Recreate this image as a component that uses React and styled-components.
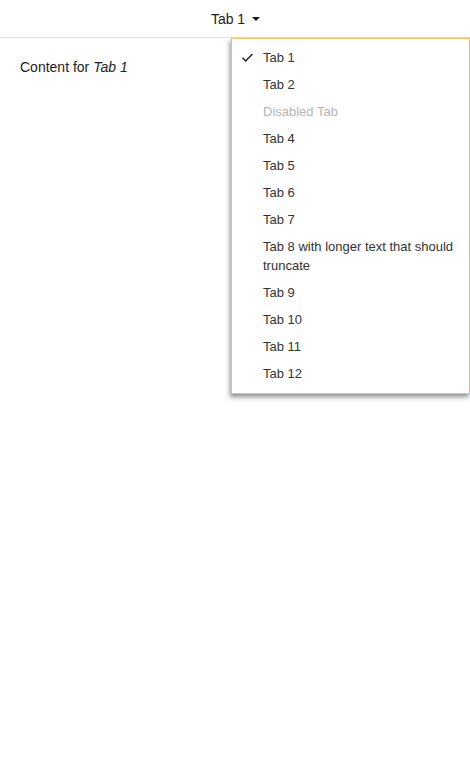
import React from 'react'
import styled, { createGlobalStyle } from 'styled-components'

const Global = createGlobalStyle`
  body {
    margin: 0;
    font-family: "Liberation Sans", Arial, sans-serif;
    color: #222;
    background: #fff;
  }
`

const Page = styled.div`
  position: relative;
  width: 470px;
  min-height: 768px;
`

const TabBar = styled.div`
  height: 37px;
  border-bottom: 1px solid #e0e0e0;
  display: flex;
  align-items: center;
  justify-content: center;
`

const TabButton = styled.button`
  display: flex;
  align-items: center;
  gap: 7px;
  border: 0;
  background: none;
  padding: 0;
  margin-left: 1px;
  font: inherit;
  font-size: 14px;
  color: #1a1a1a;
  cursor: pointer;
`

const Caret = styled.span`
  width: 0;
  height: 0;
  border-left: 4px solid transparent;
  border-right: 4px solid transparent;
  border-top: 4px solid #1a1a1a;
  margin-top: 1px;
`

const Content = styled.div`
  padding: 20px 20px;
  font-size: 14px;
  line-height: 19px;
  color: #222;
`

const Menu = styled.ul`
  position: absolute;
  top: 38px;
  left: 231px;
  width: 237px;
  margin: 0;
  padding: 5px 0 6px;
  list-style: none;
  background: #fff;
  border: 1px solid #f3c06a;
  box-shadow: -1px 3px 5px rgba(0, 0, 0, 0.45);
`

const Item = styled.li`
  display: flex;
  align-items: flex-start;
  padding: 4px 8px 4px 7px;
  font-size: 13px;
  line-height: 19px;
  color: ${({ $disabled }) => ($disabled ? '#b5b5b5' : '#333')};
`

const IconSlot = styled.span`
  flex: 0 0 16px;
  height: 19px;
  margin-right: 8px;
  display: flex;
  align-items: center;
  justify-content: center;
`

const Check = () => (
  <svg width="15" height="15" viewBox="0 0 24 24" fill="none" stroke="#222" strokeWidth="2.4">
    <path d="M4 12.5l5 5L20 6.5" />
  </svg>
)

const tabs = [
  'Tab 1', 'Tab 2', 'Disabled Tab', 'Tab 4', 'Tab 5', 'Tab 6', 'Tab 7',
  'Tab 8 with longer text that should truncate', 'Tab 9', 'Tab 10', 'Tab 11', 'Tab 12',
]

export default function App() {
  return (
    <Page>
      <Global />
      <TabBar>
        <TabButton>Tab 1 <Caret /></TabButton>
      </TabBar>
      <Content>Content for <em>Tab 1</em></Content>
      <Menu>
        {tabs.map((t, i) => (
          <Item key={t} $disabled={t === 'Disabled Tab'}>
            <IconSlot>{i === 0 && <Check />}</IconSlot>
            <span>{t}</span>
          </Item>
        ))}
      </Menu>
    </Page>
  )
}
